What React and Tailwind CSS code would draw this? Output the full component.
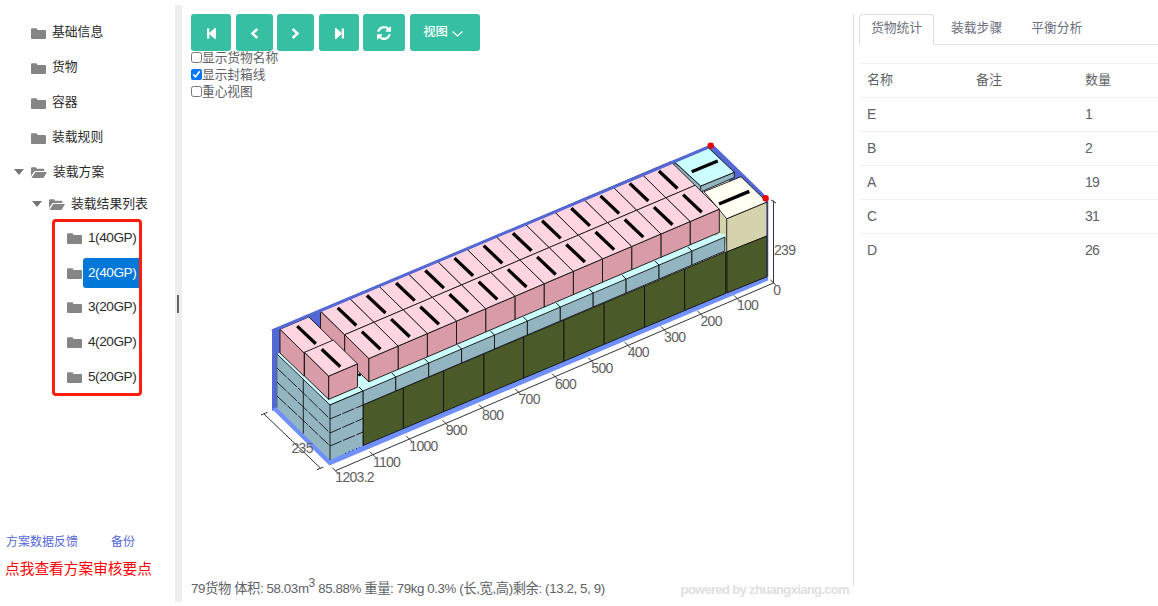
import React from "react";

const FONT = "font-['Liberation_Sans','Noto_Sans_CJK_SC',sans-serif]";

function Folder() {
  return (
    <svg className="mt-[1px] h-[11px] w-[15px] shrink-0" viewBox="0 0 15 11" fill="#858585">
      <path d="M0 1.2Q0 .2 1 .2H5Q6 .2 6.2 1.2L6.5 1.9H14Q15 1.9 15 2.8V10Q15 11 14 11H1Q0 11 0 10Z" />
    </svg>
  );
}

function FolderOpen() {
  return (
    <svg className="mt-[1px] h-[11px] w-[16px] shrink-0" viewBox="0 0 16 11" fill="#858585">
      <path d="M0 9V1.2Q0 .2 1 .2H4.6Q5.5 .2 5.7 1.2L5.9 1.8H12.4Q13.3 1.8 13.3 2.8V4H4.6Q3.6 4 3 4.7Z" />
      <path d="M4.4 5H16L13 10.2Q12.6 11 11.7 11H.4Z" />
    </svg>
  );
}

function Arrow() {
  return (
    <svg className="h-[6px] w-[10px] shrink-0" viewBox="0 0 10 6" fill="#777">
      <path d="M0 0H10L5 6Z" />
    </svg>
  );
}

function Sidebar() {
  const results = ["1(40GP)", "2(40GP)", "3(20GP)", "4(20GP)", "5(20GP)"];
  return (
    <aside className="flex h-full w-[175px] shrink-0 flex-col pt-[15px] text-[#2b2b2b]">
      {["基础信息", "货物", "容器", "装载规则"].map((t) => (
        <div key={t} className="flex h-[35px] items-center gap-[6px] pl-[31px]">
          <Folder />
          <span>{t}</span>
        </div>
      ))}
      <div className="flex h-[34px] items-center pl-[14px]">
        <Arrow />
        <span className="ml-[7px] mr-[6px] flex"><FolderOpen /></span>
        <span>装载方案</span>
      </div>
      <div className="flex h-[30px] items-center pl-[32px]">
        <Arrow />
        <span className="ml-[7px] mr-[6px] flex"><FolderOpen /></span>
        <span>装载结果列表</span>
      </div>
      <div className="ml-[52px] h-[177px] w-[90px] rounded-[4px] border-[3px] border-[#ff1d10]">
        <div className="-mt-[1.5px]">
          {results.map((t, i) => (
            <div key={t} className="flex h-[34.7px] items-center pl-[12px]">
              <Folder />
              <span
                className={
                  i === 1
                    ? "ml-px flex h-[30px] w-[57px] items-center whitespace-nowrap rounded-l-[3px] bg-[#0078d9] pl-[5px] text-[13.6px] tracking-[-0.45px] text-white"
                    : "ml-px flex h-[30px] w-[57px] items-center whitespace-nowrap pl-[5px] text-[13.6px] tracking-[-0.45px]"
                }
              >
                {t}
              </span>
            </div>
          ))}
        </div>
      </div>
      <div className="mt-[136px] flex h-[19px] items-center gap-[33px] pl-[6px] text-[12px] text-[#5567dd]">
        <span>方案数据反馈</span>
        <span>备份</span>
      </div>
      <div className="mt-[7px] flex h-[22px] items-center whitespace-nowrap pl-[5px] text-[14.7px] text-[#ff0000]">点我查看方案审核要点</div>
    </aside>
  );
}

function Step({ flip }) {
  return (
    <svg className={flip ? "mt-[1px] h-[11px] w-[9px] -scale-x-100" : "mt-[1px] h-[11px] w-[9px]"} viewBox="0 0 9 11" fill="currentColor">
      <path d="M0 .4H2.300V4.900L7.900 .1Q9 -.3 9 .6V10.400Q9 11.300 7.900 10.900L2.300 6.100V10.600H0Z" />
    </svg>
  );
}

function Chevron({ flip }) {
  return (
    <svg className={flip ? "mt-[1px] h-[11px] w-[9px] -scale-x-100" : "mt-[1px] h-[11px] w-[9px]"} viewBox="0 0 9 11" fill="none" stroke="currentColor" strokeWidth="2.500">
      <path d="M7.300 1L2.500 5.500L7.300 10" />
    </svg>
  );
}

function Toolbar() {
  const base = "flex h-[37px] items-center justify-center rounded-[3px] bg-[#36bfa2] text-white";
  return (
    <div className="flex">
      <button className={base + " w-[40px]"}><Step /></button>
      <button className={base + " ml-[5px] w-[37px]"}><Chevron /></button>
      <button className={base + " ml-[4px] w-[37px]"}><Chevron flip /></button>
      <button className={base + " ml-[5px] w-[40px]"}><Step flip /></button>
      <button className={base + " ml-[4px] w-[42px]"}>
        <svg className="mt-[1px] h-[14px] w-[14px]" viewBox="0 0 1536 1536" fill="currentColor">
          <path d="M1511 928q0 5-1 7-64 268-268 434.500T764 1536q-146 0-282.500-55T238 1324l-129 129q-19 19-45 19t-45-19-19-45V960q0-26 19-45t45-19h448q26 0 45 19t19 45-19 45l-137 137q71 66 161 102t187 36q134 0 250-65t186-179q11-17 53-117 8-23 30-23h192q13 0 22.500 9.500t9.500 22.500zm25-800v448q0 26-19 45t-45 19h-448q-26 0-45-19t-19-45 19-45l138-138Q969 256 768 256q-134 0-250 65T332 500q-11 17-53 117-8 23-30 23H50q-13 0-22.500-9.500T18 608v-7q65-268 270-434.500T768 0q146 0 284 55.500T1297 212l130-129q19-19 45-19t45 19 19 45z" />
        </svg>
      </button>
      <button className={base + " ml-[5px] w-[70px] gap-[4px] pr-[4px] text-[12.3px] font-medium"}>
        <span>视图</span>
        <svg className="mt-[2px] h-[6px] w-[11px]" viewBox="0 0 11 6" fill="none" stroke="currentColor" strokeWidth="1.2">
          <path d="M.5 .5L5.500 5L10.500 .5" />
        </svg>
      </button>
    </div>
  );
}

function Check({ label, on }) {
  return (
    <label className="flex h-[17px] items-center">
      <input type="checkbox" readOnly checked={!!on} className="m-0 h-[11px] w-[11px] shrink-0 accent-[#0075ff]" />
      <span className="pt-[2px]">{label}</span>
    </label>
  );
}

const pts = (a) => a.map((p) => p.join(",")).join(" ");

function Poly({ p, fill, line = true }) {
  return <polygon points={pts(p)} fill={fill} stroke={line ? "#111" : "none"} strokeWidth="0.9" />;
}

function Mark({ x, y }) {
  return <line x1={x - 9.300} y1={y - 8.800} x2={x + 9.300} y2={y + 8.800} stroke="#000" strokeWidth="3.3" />;
}

const TOP = "#ffd5e1";
const SIDE = "#d99ca6";
const TEAL = "#92b5c1";
const CYAN = "#ccffff";
const OLIVE = "#4a5b29";
const WALL = "#5468d3";

/* A pink carton given by the rear-left corner of its lid. */
function Carton({ x, y, w = 29.2, face, end }) {
  const h = -w * 0.426;
  const a = [x, y], b = [x + w, y + h], c = [x + w + 24.2, y + h + 23.8], d = [x + 24.2, y + 23.8];
  return (
    <g>
      {end && <Poly p={[a, d, [d[0], d[1] + 23.300], [a[0], a[1] + 23.800]]} fill={SIDE} />}
      {face && <Poly p={[d, c, [c[0], c[1] + 23.300], [d[0], d[1] + 23.300]]} fill={SIDE} />}
      <Poly p={[a, b, c, d]} fill={TOP} />
      <Mark x={x + 26.5} y={y + 5.700} />
    </g>
  );
}

function Scene() {
  const row = [...Array(12).keys()];
  const greenX = [363, 403.4, 443.6, 484, 523.6, 564, 604.2, 644.5, 684.7, 725.5];
  const gTop = (x) => 405 - (x - 363) * 0.4225;
  const gBot = (x) => 445.5 - (x - 363) * 0.4195;
  const tTop = (x) => 405 - (x - 330) * 0.4253;
  return (
    <svg className="block h-[360px] w-[540px]" viewBox="260 135 540 360">
      <polygon points="272,330 711,145 711,152 320,330 280,354 277,409 272,411" fill={WALL} />
      <polygon points="272,409 277,407 330,459 768,275 768,280.5 329.5,465.500" fill="#7090ff" />
      <polygon points="707,146.500 713,144.500 768,198 768,207 735,190" fill={WALL} />
      <line x1="767.6" y1="199" x2="767.6" y2="277" stroke={WALL} strokeWidth="1.4" />

      <Poly p={[[674, 161.7], [700.7, 186], [704, 196], [674, 166]]} fill={TEAL} />
      <Poly p={[[700.7, 186], [734.3, 172.3], [734.3, 177.500], [700.7, 192]]} fill={TEAL} />
      <Poly p={[[674, 161.3], [708.3, 147.7], [734.3, 172.3], [700.7, 186]]} fill={CYAN} />
      <line x1="691.7" y1="171.700" x2="717.700" y2="161" stroke="#000" strokeWidth="3.2" />

      <polygon points="277,354 330,405 725,237 690,205" fill={CYAN} />

      <Poly p={[[715, 207], [726.7, 218.7], [726.7, 252], [724.5, 236], [715, 236]]} fill="#d5d2ae" line={false} />
      <Poly p={[[726.7, 218.700], [767, 202], [767, 236], [726.7, 252]]} fill="#d5d2ae" />
      <Poly p={[[704, 191.7], [741, 176.7], [767, 202], [726.7, 218.7]]} fill="#fffff4" />
      <line x1="719" y1="204" x2="749.3" y2="191.300" stroke="#000" strokeWidth="3.5" />
      <Poly p={[[726.7, 252], [767, 236], [767, 276.7], [726.7, 293]]} fill={OLIVE} />
      <polygon points="714,239 719,233 725,234.500 725,239" fill={CYAN} />

      {greenX.slice(0, 9).map((x, i) => {
        const n = greenX[i + 1];
        return <Poly key={x} p={[[x, gTop(x)], [n, gTop(n)], [n, gBot(n)], [x, gBot(x)]]} fill={OLIVE} />;
      })}
      <line x1="726.4" y1="252" x2="726.4" y2="293" stroke="#222c10" strokeWidth="2.200" />

      {row.map((i) => {
        const x = 330 + i * 32.9, n = x + 32.9;
        return (
          <g key={i}>
            <Poly p={[[x, tTop(x)], [n, tTop(n)], [n, tTop(n) + 13.900], [x, tTop(x) + 13.900]]} fill={TEAL} />
            {i > 0 && <line x1={x - 4} y1={tTop(x) - 4} x2={x} y2={tTop(x)} stroke="#111" />}
          </g>
        );
      })}
      <polygon points="330,405 363,391 363,445.500 330,460" fill={TEAL} />
      <polygon points="277,354 330,405 330,460 277,408" fill={TEAL} />
      <g fill="none" stroke="#111" strokeWidth="0.9">
        <path d="M330 405L363 391V445.500M330 405V460M303.300 379V433.500M277 354L330 405" />
        <path d="M277 354V408" stroke="#4b6a80" />
        <path d="M277 368L303.300 393L330 419L363 405M277 382L303.300 407L330 433L363 418.500M277 396L303.300 420.500L330 446L363 432" strokeDasharray="13 1.500" />
        <path d="M345 453.500L360 447" strokeDasharray="1 3" />
      </g>

      {row.slice().reverse().map((i) => (
        <Carton key={i} x={320.5 + i * 29.2} y={311 - i * 12.45} end={i === 0} />
      ))}
      {row.slice().reverse().map((i) => (
        <Carton key={i} x={344.700 + i * 29.2} y={334.700 - i * 12.45} face end={i === 0} />
      ))}
      <Carton x={280} y={329.2} w={28.800} end />
      <Carton x={304.500} y={352.300} w={28.800} face end />
      <circle cx="359.500" cy="374.700" r="1.500" />

      <line x1="272" y1="331" x2="711" y2="146" stroke={WALL} strokeWidth="3" />
      <circle cx="710.700" cy="145.600" r="3.200" fill="#e90000" />
      <circle cx="765.600" cy="198.200" r="3.200" fill="#e90000" />

      <g stroke="#333" strokeWidth="1" fill="none">
        <path d="M335.500 470.700L773.500 283V200.500M771 200L776 203" />
        <path d="M264 414L320.700 468.300M261 415L267.500 412.300M317 469.700L323.500 467" />
        {[...Array(12).keys(), 12.032].map((k) => {
          const x = 773.3 - 36.4 * k, y = 282.700 + 15.63 * k;
          return <path key={k} d={`M${x - 3} ${y - 3}L${x + 3} ${y + 3}`} />;
        })}
      </g>
      <g fill="#5f5f5f" className="text-[14px] tracking-[-0.7px]">
        {[...Array(12).keys(), 12.032].map((k) => (
          <text key={k} x={773.3 - 36.4 * k} y={294.800 + 15.63 * k - (k > 12 ? 1 : 0)}>
            {k > 12 ? "1203.2" : k * 100}
          </text>
        ))}
        <text x="774" y="255">239</text>
        <text x="291.500" y="453">235</text>
      </g>
    </svg>
  );
}

function Viewer() {
  return (
    <main className="flex h-full w-[671px] shrink-0 flex-col pl-[9px] pt-[14px] text-[#606266]">
      <Toolbar />
      <div className="-mt-[2px] text-[12.7px]">
        <Check label="显示货物名称" />
        <Check label="显示封箱线" on />
        <Check label="重心视图" />
      </div>
      <div className="ml-[69px] mt-[35px]">
        <Scene />
      </div>
      <div className="mt-[84px] flex h-[20px] items-center justify-between whitespace-nowrap pr-[4px]">
        <span className="text-[13.3px] tracking-[-0.39px]">
          79货物 体积: 58.03m<sup className="text-[12px]">3</sup> 85.88% 重量: 79kg 0.3% (长,宽,高)剩余: (13.2, 5, 9)
        </span>
        <span className="text-[13px] font-bold tracking-[-0.66px] text-[#dfdfdf]">powered by zhuangxiang.com</span>
      </div>
    </main>
  );
}

function Stats() {
  const rows = [["名称", "备注", "数量"], ["E", "", "1"], ["B", "", "2"], ["A", "", "19"], ["C", "", "31"], ["D", "", "26"]];
  return (
    <section className="mt-[14px] flex h-[572px] flex-1 flex-col border-l border-[#dedede] pl-[5px] text-[#606266]">
      <div className="flex h-[31px] border-b border-[#e4e7ed] text-[#6b7080]">
        <div className="-mb-px flex w-[75px] items-center justify-center rounded-t-[4px] border border-b-0 border-[#dcdfe6] bg-white pb-[3px]">货物统计</div>
        <div className="flex items-center pb-[2px] pl-[17px]">装载步骤</div>
        <div className="flex items-center pb-[2px] pl-[29px]">平衡分析</div>
      </div>
      <div className="mt-[18px]">
        {rows.map((r, n) => (
          <div key={r[0]} className="grid h-[34px] grid-cols-[109px_109px_1fr] items-center border-t border-[#f0f1f3] pb-[2px] pl-[8px]">
            {r.map((c, i) => (
              <span key={i} className={n === 0 ? "text-[13px]" : "text-[14px] tracking-[-0.7px]"}>{c}</span>
            ))}
          </div>
        ))}
      </div>
    </section>
  );
}

export default function App() {
  return (
    <div className={"flex h-[606px] w-[1158px] overflow-hidden bg-white text-[12.8px] leading-none " + FONT}>
      <Sidebar />
      <div className="mt-[5px] flex h-[597px] w-[7px] shrink-0 items-center justify-center bg-[#eeeeee]">
        <div className="mr-[1px] h-[18px] w-[2px] bg-[#666]" />
      </div>
      <Viewer />
      <Stats />
    </div>
  );
}
